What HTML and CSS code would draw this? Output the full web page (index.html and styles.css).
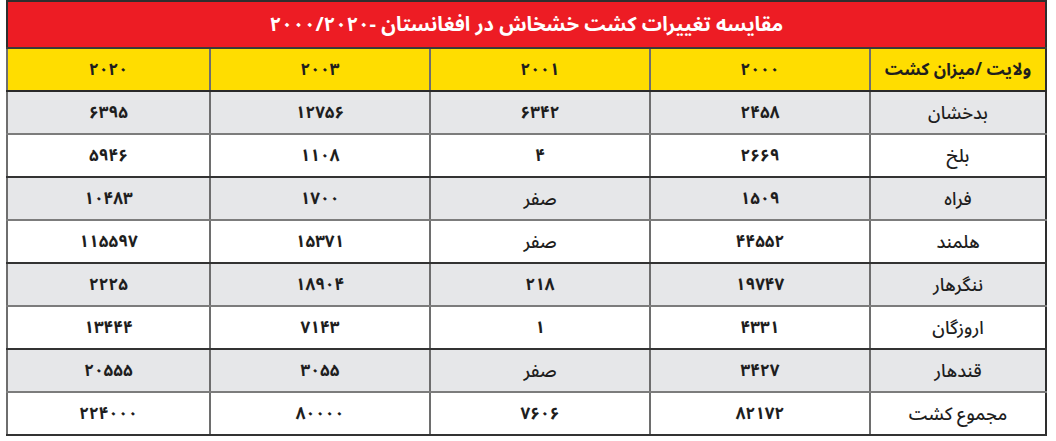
FILE: index.html
```html
<!DOCTYPE html>
<html lang="fa" dir="rtl">
<head>
<meta charset="utf-8">
<link rel="stylesheet" href="styles.css">
</head>
<body>
<div class="wrap">
<table class="poppy">
  <colgroup>
    <col class="c-prov"><col class="c-y"><col class="c-y"><col class="c-y"><col class="c-last">
  </colgroup>
  <thead>
    <tr class="title-row"><th colspan="5">مقایسه تغییرات کشت خشخاش در افغانستان -<bdi dir="ltr">۲۰۰۰/۲۰۲۰</bdi></th></tr>
    <tr class="head-row"><th>ولایت /میزان کشت</th><th>۲۰۰۰</th><th>۲۰۰۱</th><th>۲۰۰۳</th><th>۲۰۲۰</th></tr>
  </thead>
  <tbody>
    <tr class="g"><td class="name">بدخشان</td><td>۲۴۵۸</td><td>۶۳۴۲</td><td>۱۲۷۵۶</td><td>۶۳۹۵</td></tr>
    <tr class="w"><td class="name">بلخ</td><td>۲۶۶۹</td><td>۴</td><td>۱۱۰۸</td><td>۵۹۴۶</td></tr>
    <tr class="g"><td class="name">فراه</td><td>۱۵۰۹</td><td class="name">صفر</td><td>۱۷۰۰</td><td>۱۰۴۸۳</td></tr>
    <tr class="w"><td class="name">هلمند</td><td>۴۴۵۵۲</td><td class="name">صفر</td><td>۱۵۳۷۱</td><td>۱۱۵۵۹۷</td></tr>
    <tr class="g"><td class="name">ننگرهار</td><td>۱۹۷۴۷</td><td>۲۱۸</td><td>۱۸۹۰۴</td><td>۲۲۲۵</td></tr>
    <tr class="w"><td class="name">اروزگان</td><td>۴۳۳۱</td><td>۱</td><td>۷۱۴۳</td><td>۱۳۴۴۴</td></tr>
    <tr class="g"><td class="name">قندهار</td><td>۳۴۲۷</td><td class="name">صفر</td><td>۳۰۵۵</td><td>۲۰۵۵۵</td></tr>
    <tr class="w"><td class="name">مجموع کشت</td><td>۸۲۱۷۲</td><td>۷۶۰۶</td><td>۸۰۰۰۰</td><td>۲۲۴۰۰۰</td></tr>
  </tbody>
</table>
</div>
</body>
</html>
```

FILE: styles.css
```css
html, body {
  margin: 0;
  padding: 0;
  background: #ffffff;
}
.wrap {
  padding: 0 9px 0 8px;
  width: 1039px;
}
.poppy {
  direction: rtl;
  width: 1039px;
  border-collapse: collapse;
  table-layout: fixed;
  font-family: "Noto Sans Arabic", "Vazirmatn", "DejaVu Sans", sans-serif;
  color: #1e1e1e;
  border: 2px solid #2e2e2e;
}
.c-prov { width: 176px; }
.c-y { width: 220px; }
.c-last { width: 203px; }

.title-row th {
  background: #ed1c24;
  color: #ffffff;
  height: 45px;
  padding: 0;
  font-size: 20px;
  font-weight: 700;
  text-align: center;
  border-bottom: 2px solid #3a3a3a;
}
.head-row th {
  background: #ffdd00;
  height: 41px;
  padding: 0;
  font-size: 17px;
  font-weight: 700;
  text-align: center;
  border-bottom: 2px solid #2a2a2a;
  border-left: 2px solid #6e6e6e;
}
tbody td {
  height: 41px;
  padding: 0;
  text-align: center;
  font-size: 17px;
  font-weight: 700;
  border-left: 2px solid #6e6e6e;
}
tbody td.name {
  font-size: 18px;
  font-weight: 500;
}
tr.g td {
  background: #e6e7e9;
  border-bottom: 2px solid #7c7c7c;
}
tr.w td {
  background: #ffffff;
  border-bottom: 2px solid #333333;
}
```
